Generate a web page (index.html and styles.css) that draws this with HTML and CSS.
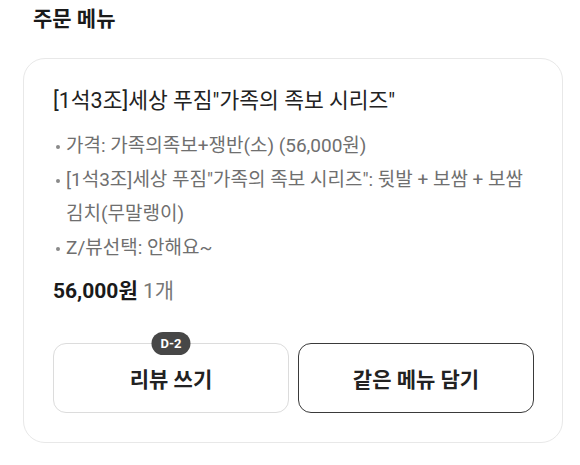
FILE: index.html
```html
<!DOCTYPE html>
<html lang="ko">
<head>
<meta charset="utf-8">
<title>주문 메뉴</title>
<link rel="stylesheet" href="styles.css">
</head>
<body>
<div class="page">
  <h2 class="section-title">주문 메뉴</h2>
  <div class="card">
    <div class="menu-name">[1석3조]세상 푸짐"가족의 족보 시리즈"</div>
    <ul class="options">
      <li>가격: 가족의족보+쟁반(소) (56,000원)</li>
      <li>[1석3조]세상 푸짐"가족의 족보 시리즈": 뒷발 + 보쌈 + 보쌈 김치(무말랭이)</li>
      <li>Z/뷰선택: 안해요~</li>
    </ul>
    <div class="price"><strong>56,000원</strong> <span class="qty">1개</span></div>
    <div class="actions">
      <button class="btn btn-review"><span class="badge">D-2</span>리뷰 쓰기</button>
      <button class="btn btn-again">같은 메뉴 담기</button>
    </div>
  </div>
</div>
</body>
</html>
```
FILE: styles.css
```css
* { box-sizing: border-box; }
html, body { margin: 0; padding: 0; background: #fff; }
body {
  font-family: Roboto, "Noto Sans CJK KR", "Noto Sans", sans-serif;
  color: #222;
}
.page {
  padding: 4px 17px 0 23px;
}
.section-title {
  margin: 0;
  padding-left: 10px;
  font-size: 21px;
  line-height: 30px;
  font-weight: 700;
  color: #1a1a1a;
}
.card {
  margin-top: 24px;
  width: 540px;
  border: 1px solid #e8e8e8;
  border-radius: 22px;
  padding: 26px 28px 29px 29px;
}
.menu-name {
  font-size: 21.5px;
  line-height: 32px;
  color: #222;
}
.options {
  list-style: none;
  margin: 12px 0 0;
  padding: 0;
  font-size: 19px;
  line-height: 34px;
  color: #6f6f6f;
}
.options li {
  position: relative;
  padding-left: 13px;
}
.options li::before {
  content: "";
  position: absolute;
  left: 3px;
  top: 16px;
  width: 4px;
  height: 4px;
  border-radius: 50%;
  background: #8a8a8a;
}
.price {
  margin-top: 11px;
  font-size: 21px;
  line-height: 30px;
}
.price strong { font-weight: 700; color: #1a1a1a; }
.qty { color: #777; font-weight: 400; }
.actions {
  margin-top: 37px;
  display: flex;
  gap: 9px;
}
.btn {
  position: relative;
  flex: 1;
  height: 70px;
  border-radius: 13px;
  background: #fff;
  font-family: inherit;
  font-size: 21px;
  font-weight: 700;
  color: #222;
  cursor: pointer;
}
.btn-review { border: 1.5px solid #dcdcdc; }
.btn-again { border: 1.5px solid #3a3a3a; }
.badge {
  position: absolute;
  left: 50%;
  top: -12px;
  transform: translateX(-50%);
  height: 23px;
  padding: 0 9px;
  border-radius: 12px;
  background: #474747;
  color: #fff;
  font-size: 13px;
  line-height: 23px;
  font-weight: 700;
}
```
